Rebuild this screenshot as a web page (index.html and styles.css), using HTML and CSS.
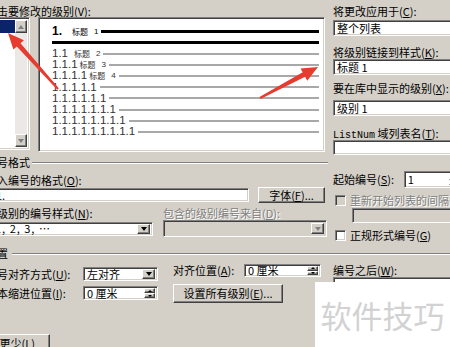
FILE: index.html
```html
<!DOCTYPE html>
<html lang="zh-CN">
<head>
    <meta charset="UTF-8">
    <meta name="viewport" content="width=device-width, initial-scale=1.0">
    <title>定义新多级列表</title>
    <link rel="stylesheet" href="styles.css">
</head>
<body>

    <div class="dialog">
        <div class="top">
            <div class="levels">
                <div class="label label-top">单击要修改的级别(<u>V</u>):</div>
                <div class="levels-row">
                    <div class="level-list sunken">
                        <ul class="items">
                            <li class="selected">1</li>
                            <li></li>
                            <li></li>
                            <li></li>
                            <li></li>
                            <li></li>
                            <li></li>
                            <li></li>
                            <li></li>
                        </ul>
                        <div class="vscroll">
                            <span class="sb-btn raised"><span class="tri tri-up dim"></span></span>
                            <span class="sb-track"></span>
                            <span class="sb-btn raised"><span class="tri tri-down dim"></span></span>
                        </div>
                    </div>
                    <div class="preview sunken">
                        <div class="pv-row pv-first"><span class="pv-num">1.</span><span class="pv-title">标题<span class="pv-lvl">1</span></span><span class="pv-line"></span></div>
                        <div class="pv-rule"></div>
                        <div class="pv-row pv-second"><span class="pv-num">1.1</span><span class="pv-title">标题<span class="pv-lvl">2</span></span><span class="pv-line"></span></div>
                        <div class="pv-row"><span class="pv-num">1.1.1</span><span class="pv-title">标题<span class="pv-lvl">3</span></span><span class="pv-line"></span></div>
                        <div class="pv-row"><span class="pv-num">1.1.1.1</span><span class="pv-title">标题<span class="pv-lvl">4</span></span><span class="pv-line"></span></div>
                        <div class="pv-row"><span class="pv-num">1.1.1.1.1</span><span class="pv-line"></span></div>
                        <div class="pv-row"><span class="pv-num">1.1.1.1.1.1</span><span class="pv-line"></span></div>
                        <div class="pv-row"><span class="pv-num">1.1.1.1.1.1.1</span><span class="pv-line"></span></div>
                        <div class="pv-row"><span class="pv-num">1.1.1.1.1.1.1.1</span><span class="pv-line"></span></div>
                        <div class="pv-row"><span class="pv-num">1.1.1.1.1.1.1.1.1</span><span class="pv-line"></span></div>
                    </div>
                </div>
            </div>

            <div class="side">
                <div class="label">将更改应用于(<u>C</u>):</div>
                <div class="field combo sunken apply-box"><span class="value">整个列表</span><span class="drop raised"><span class="tri tri-down"></span></span></div>
                <div class="label link-label">将级别链接到样式(<u>K</u>):</div>
                <div class="field combo sunken"><span class="value">标题 1</span><span class="drop raised"><span class="tri tri-down"></span></span></div>
                <div class="label gallery-label">要在库中显示的级别(<u>X</u>):</div>
                <div class="field combo sunken gallery-box"><span class="value">级别 1</span><span class="drop raised"><span class="tri tri-down"></span></span></div>
                <div class="label listnum-label"><span class="mono">ListNum</span> 域列表名(<u>T</u>):</div>
                <div class="field combo sunken listnum-box"><span class="value"></span><span class="drop raised"><span class="tri tri-down"></span></span></div>
            </div>
        </div>

        <div class="numbering">
            <div class="fmt">
                <div class="group-head"><span>编号格式</span><span class="etch"></span></div>
                <div class="label fmt-label">输入编号的格式(<u>O</u>):</div>
                <div class="fmt-row">
                    <div class="field sunken fmt-box"><span class="value">1.</span></div>
                    <div class="btn raised font-btn">字体(<u>F</u>)...</div>
                </div>
                <div class="style-labels">
                    <div class="label style-label">此级别的编号样式(<u>N</u>):</div>
                    <div class="label disabled">包含的级别编号来自(<u>D</u>):</div>
                </div>
                <div class="style-row">
                    <div class="field combo sunken style-box"><span class="value">1, 2, 3, …</span><span class="drop raised"><span class="tri tri-down"></span></span></div>
                    <div class="field combo sunken off include-box"><span class="value"></span><span class="drop raised"><span class="tri tri-down dim"></span></span></div>
                </div>
            </div>

            <div class="start">
                <div class="start-row">
                    <div class="label start-label">起始编号(<u>S</u>):</div>
                    <div class="field spin sunken start-box"><span class="value">1</span><span class="spin-btns"><span class="raised"><span class="tri-s tri-s-up"></span></span><span class="raised"><span class="tri-s tri-s-down"></span></span></span></div>
                </div>
                <div class="check-row restart-row disabled"><span class="check sunken off"></span>重新开始列表的间隔(<u>R</u>):</div>
                <div class="field combo sunken off restart-box"><span class="value"></span></div>
                <div class="check-row legal-row"><span class="check sunken"></span>正规形式编号(<u>G</u>)</div>
            </div>
        </div>

        <div class="group-head pos-head"><span>位置</span><span class="etch"></span></div>

        <div class="position">
            <div class="pos-a">
                <div class="label">编号对齐方式(<u>U</u>):</div>
                <div class="field combo sunken"><span class="value">左对齐</span><span class="drop raised"><span class="tri tri-down"></span></span></div>
                <div class="label">文本缩进位置(<u>I</u>):</div>
                <div class="field spin sunken"><span class="value">0 厘米</span><span class="spin-btns"><span class="raised"><span class="tri-s tri-s-up"></span></span><span class="raised"><span class="tri-s tri-s-down"></span></span></span></div>
            </div>
            <div class="pos-b">
                <div class="align-row">
                    <div class="label align-label">对齐位置(<u>A</u>):</div>
                    <div class="field spin sunken align-box"><span class="value">0 厘米</span><span class="spin-btns"><span class="raised"><span class="tri-s tri-s-up"></span></span><span class="raised"><span class="tri-s tri-s-down"></span></span></span></div>
                </div>
                <div class="btn raised all-btn">设置所有级别(<u>E</u>)...</div>
            </div>
            <div class="pos-c">
                <div class="label">编号之后(<u>W</u>):</div>
                <div class="field combo sunken after-box"><span class="value"></span></div>
            </div>
        </div>

        <div class="btn raised more-btn">&lt;&lt; 更少(<u>L</u>)</div>
    </div>

    <div class="watermark">软件技巧</div>

    <svg class="arrows" width="450" height="347" viewBox="0 0 450 347">
        <polygon points="8,33 23.9,40.3 20.5,43.3 58.8,88.3 57.3,89.7 16.8,46.6 13.4,49.6"/>
        <polygon points="318,67 300.6,68.4 302.7,72.3 259.5,97.1 260.5,98.9 305.1,76.8 307.2,80.7"/>
    </svg>

</body>
</html>
```

FILE: styles.css
```css
body {
    margin: 0;
    width: 450px;
    height: 347px;
    overflow: hidden;
    position: relative;
    background: #d4d0c8;
    font-family: "Noto Sans CJK SC", sans-serif;
    font-size: 11px;
    line-height: 13px;
    color: #000;
}
u {
    text-decoration: underline;
}
.dialog {
    margin-left: -14px;
    width: 480px;
    padding-top: 5px;
}
.label {
    height: 13px;
    white-space: nowrap;
}
.disabled {
    color: #808080;
    text-shadow: 1px 1px 0 #fff;
}
.mono {
    font-family: "Liberation Mono", monospace;
    font-size: 10px;
}

/* classic 3d borders */
.sunken {
    background: #fff;
    border: 1px solid;
    border-color: #808080 #fff #fff #808080;
    box-shadow: inset 1px 1px 0 #404040, inset -1px -1px 0 #d4d0c8;
    box-sizing: border-box;
}
.sunken.off {
    background: #d4d0c8;
}
.raised {
    background: #d4d0c8;
    border: 1px solid;
    border-color: #fff #404040 #404040 #fff;
    box-shadow: inset -1px -1px 0 #808080;
    box-sizing: border-box;
}
.btn {
    display: flex;
    align-items: center;
    justify-content: center;
    white-space: nowrap;
}

/* fields */
.field {
    display: flex;
    align-items: center;
    padding: 2px;
    white-space: nowrap;
    overflow: hidden;
    height: 16px;
}
.field .value {
    flex: 1;
    padding-left: 1px;
    overflow: hidden;
}
.drop {
    width: 13px;
    align-self: stretch;
    display: flex;
    align-items: center;
    justify-content: center;
}
.tri {
    width: 0;
    height: 0;
    border-left: 3.5px solid transparent;
    border-right: 3.5px solid transparent;
}
.tri-down {
    border-top: 4px solid #000;
}
.tri-up {
    border-bottom: 4px solid #000;
}
.tri-down.dim {
    border-top-color: #808080;
}
.tri-up.dim {
    border-bottom-color: #808080;
}
.spin-btns {
    width: 11px;
    align-self: stretch;
    display: flex;
    flex-direction: column;
}
.spin-btns .raised {
    flex: 1;
    display: flex;
    align-items: center;
    justify-content: center;
}
.tri-s {
    width: 0;
    height: 0;
    border-left: 2.5px solid transparent;
    border-right: 2.5px solid transparent;
}
.tri-s-up {
    border-bottom: 2px solid #000;
}
.tri-s-down {
    border-top: 2px solid #000;
}

/* top area */
.top {
    display: flex;
}
.levels {
    width: 339px;
}
.label-top {
    height: 12px;
}
.levels-row {
    display: flex;
    gap: 8px;
    align-items: flex-start;
}
.level-list {
    width: 44px;
    height: 133px;
    padding: 2px;
    display: flex;
}
.items {
    list-style: none;
    margin: 0;
    padding: 0;
    flex: 1;
}
.items li {
    height: 13px;
    padding-left: 2px;
}
.items li.selected {
    background: #0a246a;
    color: #fff;
}
.vscroll {
    width: 12px;
    display: flex;
    flex-direction: column;
}
.sb-btn {
    height: 13px;
    display: flex;
    align-items: center;
    justify-content: center;
}
.sb-track {
    flex: 1;
    background: #ebe9e5;
}
.preview {
    width: 287px;
    height: 135px;
    padding: 7px 5px 0 13px;
    color: #333;
}
.pv-row {
    display: flex;
    align-items: center;
    height: 11.2px;
    white-space: nowrap;
}
.pv-num {
    font-family: "Liberation Sans", Arial, sans-serif;
    font-size: 11.5px;
    line-height: 11px;
}
.pv-title {
    font-size: 8px;
    line-height: 9px;
    margin-left: 2px;
    display: flex;
    align-items: center;
}
.pv-lvl {
    font-family: "Liberation Sans", Arial, sans-serif;
    margin-left: 6px;
}
.pv-line {
    flex: 1;
    height: 2px;
    background: #a8a8a8;
    margin-left: 3px;
}
.pv-first {
    height: 12px;
    color: #000;
}
.pv-first .pv-num {
    font-size: 12px;
    font-weight: bold;
}
.pv-first .pv-title {
    margin-left: 10px;
}
.pv-first .pv-line {
    height: 3px;
    background: #000;
}
.pv-second {
    margin-top: 4px;
}
.pv-second .pv-title {
    margin-left: 6px;
}
.pv-rule {
    height: 3px;
    background: #000;
    margin-top: 4px;
}

.side {
    margin-left: 8px;
    width: 140px;
}
.apply-box {
    margin-top: 2px;
}
.link-label {
    margin-top: 10px;
}
.gallery-label {
    margin-top: 7px;
}
.gallery-box {
    margin-top: 5px;
}
.listnum-label {
    margin-top: 11px;
}
.listnum-box {
    height: 15px;
}

/* group headers */
.group-head {
    display: flex;
    align-items: center;
    height: 13px;
    white-space: nowrap;
}
.etch {
    flex: 1;
    border-top: 1px solid #808080;
    border-bottom: 1px solid #fff;
    margin-left: 2px;
}

/* numbering format */
.numbering {
    display: flex;
}
.fmt {
    width: 342px;
}
.fmt .group-head {
    margin-top: 1px;
}
.fmt-label {
    margin-top: 5px;
}
.fmt-row {
    display: flex;
    align-items: center;
    height: 16px;
}
.fmt-box {
    width: 263px;
    height: 14px;
    padding-left: 8px;
}
.font-btn {
    width: 67px;
    height: 16px;
    margin-left: 9px;
}
.style-labels {
    display: flex;
    margin-top: 4px;
}
.style-label {
    width: 177px;
}
.style-row {
    display: flex;
    align-items: center;
    height: 17px;
}
.style-box {
    width: 167px;
    height: 14px;
    padding: 1px 2px 1px 7px;
    letter-spacing: 1px;
}
.include-box {
    width: 164px;
    height: 17px;
    margin-left: 10px;
}

.start {
    margin-left: 5px;
    width: 130px;
}
.start-row {
    display: flex;
    align-items: center;
    margin-top: 16px;
}
.start-label {
    width: 72px;
}
.start-box {
    width: 60px;
    height: 17px;
}
.check-row {
    display: flex;
    align-items: center;
    height: 12px;
    white-space: nowrap;
}
.check {
    width: 11px;
    height: 11px;
    margin: 0 4px 0 2px;
    flex: none;
}
.restart-row {
    margin-top: 6px;
}
.restart-box {
    margin: 2px 0 0 19px;
    height: 15px;
}
.legal-row {
    margin-top: 6px;
}

/* position */
.pos-head {
    margin-top: 6px;
}
.pos-head .etch {
    margin-left: 4px;
}
.position {
    display: flex;
    align-items: flex-start;
}
.pos-a {
    display: grid;
    grid-template-columns: 97px 75px;
    row-gap: 5px;
    align-items: center;
    margin-top: 7px;
}
.pos-a .field {
    height: 14px;
    padding: 1px 2px;
}
.pos-b {
    margin: 4px 0 0 15px;
}
.align-row {
    display: flex;
    align-items: center;
}
.align-label {
    width: 71px;
}
.align-box {
    width: 77px;
    height: 13px;
    padding: 1px 2px;
}
.all-btn {
    width: 110px;
    height: 19px;
    margin-top: 7px;
}
.pos-c {
    margin: 4px 0 0 12px;
    width: 140px;
}
.after-box {
    height: 16px;
}
.more-btn {
    width: 80px;
    height: 19px;
    margin: 31px 0 0 -16px;
}

/* overlays */
.watermark {
    position: absolute;
    left: 315px;
    top: 282px;
    width: 135px;
    height: 65px;
    background: #fff;
    color: #d2d2d2;
    font-size: 31px;
    line-height: 65px;
    text-align: center;
    white-space: nowrap;
}
.arrows {
    position: absolute;
    left: 0;
    top: 0;
    pointer-events: none;
}
.arrows polygon {
    fill: #e63b2e;
}
```
